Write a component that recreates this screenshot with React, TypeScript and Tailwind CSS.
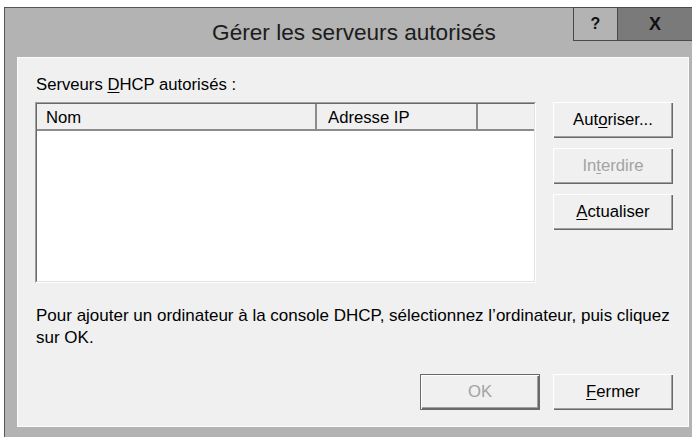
import React from "react";

// Underlines the keyboard accelerator letter in a caption
const Accel = ({ children }: { children: string }) => (
  <span className="underline underline-offset-[2px] decoration-1">{children}</span>
);

type BtnProps = {
  children: React.ReactNode;
  disabled?: boolean;
  isDefault?: boolean;
  className?: string;
};

// Classic raised Win32 push button
const PushButton = ({ children, disabled, isDefault, className = "" }: BtnProps) => (
  <div
    className={`h-[36px] w-[120px] ${isDefault ? "border border-[#6a6a6a]" : ""} ${className}`}
  >
    <div
      className={`flex h-full w-full items-center justify-center bg-[#f0f0f0] text-[16.7px] shadow-[inset_1px_1px_0_#ffffff,inset_-1px_-1px_0_#696969,inset_-2px_-2px_0_#a0a0a0] ${
        disabled ? "text-[#a3a3a3]" : "text-black"
      }`}
    >
      {children}
    </div>
  </div>
);

const ListView = () => (
  <div className="h-[181px] w-[501px] border-t border-l border-[#a0a0a0] border-r border-b border-r-[#ffffff] border-b-[#ffffff] bg-white">
    <div className="h-full w-full border-t border-l border-[#696969] border-r border-b border-r-[#e3e3e3] border-b-[#e3e3e3]">
      <div className="flex h-[27px] bg-[#f0f0f0] text-[16.7px] text-black">
        <div className="flex w-[280px] items-center border-r-2 border-b-2 border-[#8c8c8c] pl-[9px] pt-[3px]">Nom</div>
        <div className="flex w-[161px] items-center border-r-2 border-b-2 border-[#8c8c8c] pl-[11px] pt-[3px]">Adresse IP</div>
        <div className="flex-1 border-b-2 border-[#8c8c8c]" />
      </div>
    </div>
  </div>
);

export default function App() {
  return (
    <div className="h-[437px] w-[692px] overflow-hidden bg-white pl-[4px] pt-[7px] font-['Liberation_Sans',Arial,sans-serif]">
      <div className="flex h-[440px] w-[688px] flex-col border-l border-t border-[#555555] bg-[#b3b3b3]">
        {/* title bar */}
        <div className="grid h-[49px] shrink-0 grid-cols-[1fr_auto_1fr]">
          <div />
          <div className="pl-[11px] pt-[12px] text-[22.6px] leading-[26px] text-[#1c1c1c]">
            Gérer les serveurs autorisés
          </div>
          <div className="flex justify-end">
            <div className="-mt-px flex h-[34px] w-[45px] items-center justify-center border border-[#4a4a4a] bg-[#b3b3b3] text-[16px] font-bold text-[#111]">
              ?
            </div>
            <div className="-mt-px flex h-[34px] w-[74px] items-center justify-center border-y border-[#4a4a4a] bg-[#7a7a7a] text-[18px] font-bold text-[#111]">
              X
            </div>
          </div>
        </div>

        {/* client area */}
        <div className="ml-[12px] h-[370px] w-[672px] border border-[#fbfbfb] bg-[#f0f0f0] pl-[17px] pr-[15px] pt-[17px] text-[16.7px] text-black">
          <div className="pl-px leading-[19px]">
            Serveurs <Accel>D</Accel>HCP autorisés :
          </div>
          <div className="mt-[8px] flex gap-[17px]">
            <ListView />
            <div className="flex flex-col gap-[10px]">
              <PushButton>
                Aut<Accel>o</Accel>riser...
              </PushButton>
              <PushButton disabled>
                In<Accel>t</Accel>erdire
              </PushButton>
              <PushButton>
                <Accel>A</Accel>ctualiser
              </PushButton>
            </div>
          </div>
          <p className="mt-[22px] pl-px text-[17px] leading-[22px]">
            Pour ajouter un ordinateur à la console DHCP, sélectionnez l’ordinateur, puis cliquez
            <br />
            sur OK.
          </p>
          <div className="mt-[25px] flex justify-end gap-[13px]">
            <PushButton disabled isDefault>
              OK
            </PushButton>
            <PushButton>
              <Accel>F</Accel>ermer
            </PushButton>
          </div>
        </div>
      </div>
    </div>
  );
}
